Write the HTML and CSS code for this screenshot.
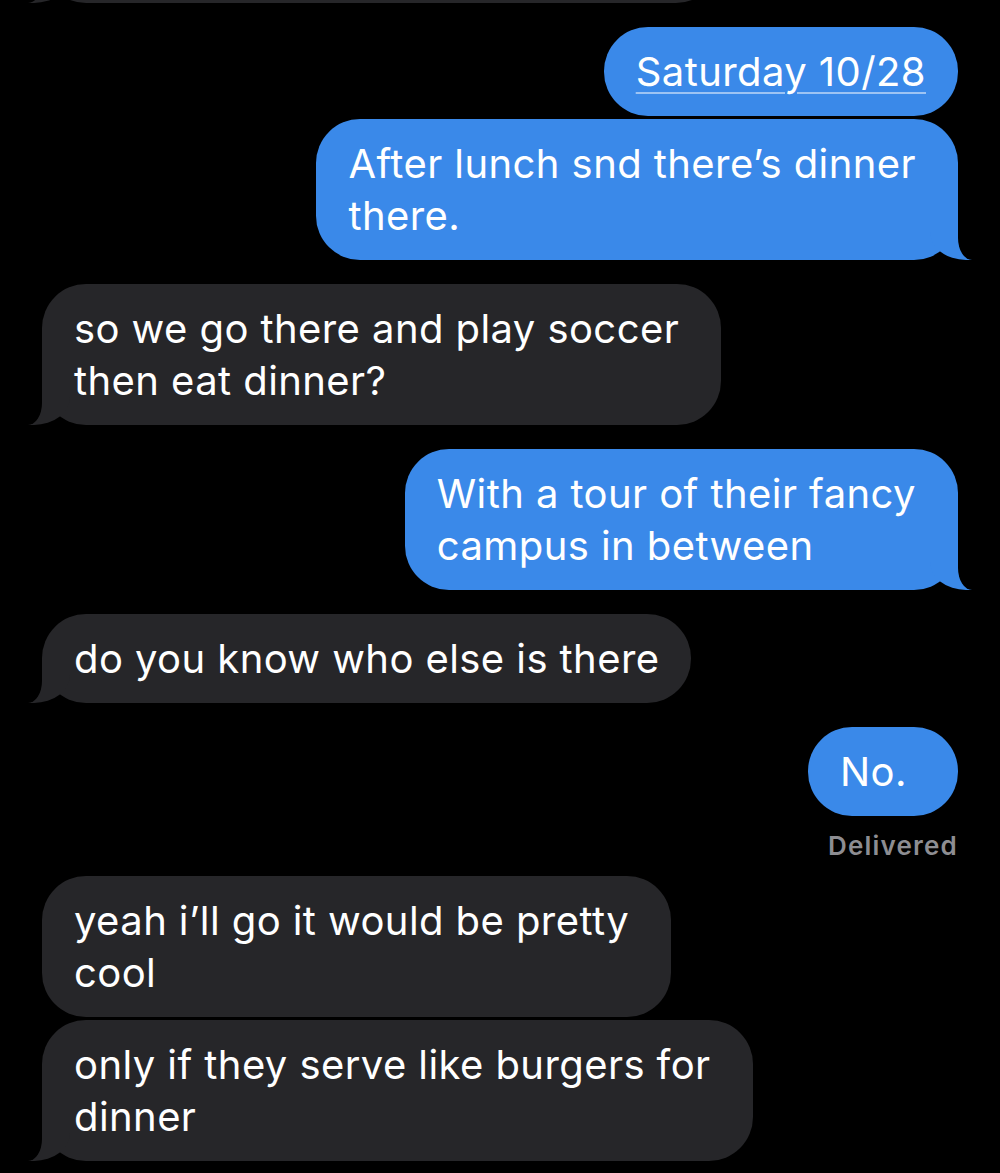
FILE: index.html
```html
<!DOCTYPE html>
<html lang="en">
<head>
<meta charset="utf-8">
<title>Messages</title>
<link rel="stylesheet" href="styles.css">
</head>
<body>
<div class="thread">
  <div class="bubble recv tail cut" aria-hidden="true"></div>

  <div class="bubble sent group"><span class="link">Saturday 10/28</span></div>
  <div class="bubble sent multi cont tail">After lunch snd there’s dinner<br>there.</div>

  <div class="bubble recv multi group tail">so we go there and play soccer<br>then eat dinner?</div>

  <div class="bubble sent multi group tail">With a tour of their fancy<br>campus in between</div>

  <div class="bubble recv group tail">do you know who else is there</div>

  <div class="bubble sent group">No.</div>
  <div class="status">Delivered</div>

  <div class="bubble recv multi">yeah i’ll go it would be pretty<br>cool</div>
  <div class="bubble recv multi cont tail">only if they serve like burgers for<br>dinner</div>
</div>
</body>
</html>
```
FILE: styles.css
```css
html, body {
  margin: 0;
  background: #000;
}

body {
  font-family: Inter, "Noto Sans", "Liberation Sans", sans-serif;
  overflow: hidden;
  height: 1173px;
}

.thread {
  display: flex;
  flex-direction: column;
  padding: 0 42px;
}

.bubble {
  position: relative;
  box-sizing: border-box;
  min-width: 150px;
  padding: 18.5px 32px;
  font-size: 40px;
  line-height: 52px;
  letter-spacing: 0.42px;
  color: #fff;
  border-radius: 44px;
  white-space: nowrap;
}

.sent {
  align-self: flex-end;
  background: #3a89e9;
}

.recv {
  align-self: flex-start;
  background: #262629;
}

.multi {
  padding-right: 42px;
}

.group {
  margin-top: 24px;
}

.cont {
  margin-top: 3px;
}

.cut {
  width: 678px;
  height: 100px;
  margin-top: -97px;
}

.link {
  text-decoration: underline;
  text-decoration-color: rgba(255, 255, 255, 0.5);
  text-decoration-thickness: 2px;
  text-underline-offset: 6px;
}

/* bubble tails */
.tail::before,
.tail::after {
  content: "";
  position: absolute;
  bottom: 0;
  height: 44px;
}

.sent.tail::before {
  right: -14px;
  width: 42px;
  background: #3a89e9;
  border-bottom-left-radius: 36px 28px;
}

.sent.tail::after {
  right: -40px;
  width: 40px;
  background: #000;
  border-bottom-left-radius: 14px 22px;
}

.recv.tail::before {
  left: -14px;
  width: 42px;
  background: #262629;
  border-bottom-right-radius: 36px 28px;
}

.recv.tail::after {
  left: -40px;
  width: 40px;
  background: #000;
  border-bottom-right-radius: 14px 22px;
}

.status {
  align-self: flex-end;
  margin: 15px 0 15px;
  font-size: 26px;
  line-height: 30px;
  font-weight: 600;
  letter-spacing: 1.2px;
  color: #8d8d92;
}
```
